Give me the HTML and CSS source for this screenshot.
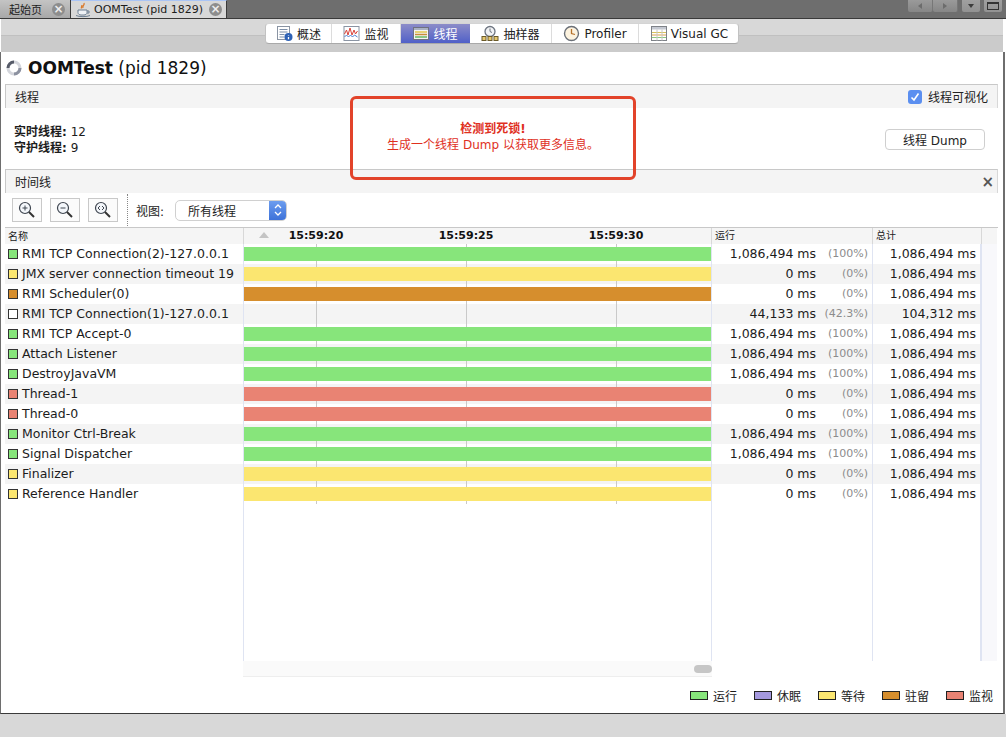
FILE: index.html
```html
<!DOCTYPE html>
<html lang="zh">
<head>
<meta charset="utf-8">
<title>OOMTest (pid 1829)</title>
<link rel="stylesheet" href="styles.css">
</head>
<body>
<div class="app">
  <div class="tabbar">
    <div class="tab tab-idle"><span class="tab-label">起始页</span><span class="tab-close">×</span></div>
    <div class="tab tab-active">
      <svg class="cup" width="16" height="16" viewBox="0 0 16 16"><path d="M9 1c1 2-2 3-1 5 M7 3c0 1.500-1 2-.5 3.500" fill="none" stroke="#d9792b" stroke-width="1.300"/><path d="M3 8h9v2.500c0 1.500-1.500 2.500-3 2.500H6c-1.500 0-3-1-3-2.500z" fill="#eef1f5" stroke="#6d7f92"/><path d="M12 9h2v2h-2" fill="none" stroke="#6d7f92"/><path d="M1 13.500c3 1.500 11 1.500 14 0" fill="none" stroke="#6d7f92"/></svg>
      <span class="tab-label">OOMTest (pid 1829)</span><span class="tab-close">×</span>
    </div>
    <div class="win-btns">
      <div class="nav-pair"><span class="win-btn nav"><i class="tri tri-l"></i></span><span class="win-btn nav"><i class="tri tri-r"></i></span></div>
      <span class="win-btn drop"><i class="tri tri-d"></i></span>
      <span class="win-btn max"><i class="max-box"></i></span>
    </div>
  </div>

  <div class="toolbar">
    <div class="segments">
      <div class="seg">
        <svg width="17" height="17" viewBox="0 0 17 17"><rect x="1.500" y="1.500" width="12" height="13" fill="#fff" stroke="#8a94a3"/><path d="M3.500 4.500h8M3.500 7h8M3.500 9.500h5M3.500 12h5" stroke="#7d8fa8"/><circle cx="12.500" cy="12" r="4" fill="#2f62b5"/><path d="M12.500 10.500v.6M12.500 12v2.200" stroke="#fff" stroke-width="1.300"/></svg>
        <span>概述</span>
      </div>
      <div class="seg">
        <svg width="17" height="17" viewBox="0 0 17 17"><rect x="1" y="1.500" width="15" height="14" fill="#fff" stroke="#8a94a3"/><path d="M1.500 9l2-4 1.500 5 2-7 2 7 2-5 1.500 4 2-3" fill="none" stroke="#d8433a"/><path d="M1.500 12l2-2 2 2 2-2 2 2 2-2 3 2" fill="none" stroke="#4b7fd0"/></svg>
        <span>监视</span>
      </div>
      <div class="seg seg-on">
        <svg width="16" height="15" viewBox="0 0 16 15"><rect x=".5" y="1.500" width="15" height="12" fill="#f4f4f4" stroke="#6f7180"/><rect x="1" y="2" width="14" height="2" fill="#aab2c4"/><path d="M2 6h12" stroke="#e3c94c" stroke-width="1.300"/><path d="M2 8.500h12" stroke="#c88d3a" stroke-width="1.300"/><path d="M2 11h12" stroke="#69b85f" stroke-width="1.300"/></svg>
        <span>线程</span>
      </div>
      <div class="seg">
        <svg width="18" height="17" viewBox="0 0 18 17"><circle cx="9" cy="6.500" r="5" fill="#f2f3f5" stroke="#6d7480" stroke-width="1.300"/><path d="M9 3.500v3l2 1" fill="none" stroke="#6d7480"/><rect x="1" y="11.500" width="4" height="4" fill="#e5c66d" stroke="#6b5a28"/><rect x="7" y="11.500" width="4" height="4" fill="#e5c66d" stroke="#6b5a28"/><rect x="13" y="11.500" width="4" height="4" fill="#e5c66d" stroke="#6b5a28"/></svg>
        <span>抽样器</span>
      </div>
      <div class="seg">
        <svg width="17" height="17" viewBox="0 0 17 17"><circle cx="8.500" cy="8.500" r="7" fill="#fdf3df" stroke="#6b7078" stroke-width="1.400"/><path d="M8.500 4v4.500l3.500 1" fill="none" stroke="#b7722a" stroke-width="1.300"/></svg>
        <span>Profiler</span>
      </div>
      <div class="seg">
        <svg width="16" height="15" viewBox="0 0 16 15"><rect x=".5" y=".5" width="15" height="14" fill="#fff" stroke="#7e8288"/><rect x="1" y="1" width="14" height="2.500" fill="#c5c9d2"/><path d="M1 6.500h14" stroke="#d9c25a"/><path d="M1 9h14" stroke="#e0a04a"/><path d="M1 11.500h14" stroke="#8dc77f"/><path d="M6 3.500v11M11 3.500v11" stroke="#c8c8c8"/></svg>
        <span>Visual GC</span>
      </div>
    </div>
  </div>

  <div class="content">
    <h1 class="title">
      <svg width="16" height="16" viewBox="0 0 16 16"><circle cx="8" cy="8" r="6" fill="none" stroke="#d4d6dc" stroke-width="3"/><path d="M2 8a6 6 0 0 1 6-6" fill="none" stroke="#565b68" stroke-width="3"/><path d="M14 8a6 6 0 0 1-6 6" fill="none" stroke="#8c91a0" stroke-width="3"/></svg>
      <span><b>OOMTest</b> (pid 1829)</span>
    </h1>

    <div class="pane-head">
      <span>线程</span>
      <label class="visual">
        <span class="check"><svg width="10" height="10" viewBox="0 0 10 10"><path d="M1.500 5.500l2.500 2.500 4.500-6.500" fill="none" stroke="#fff" stroke-width="1.600"/></svg></span>
        <span>线程可视化</span>
      </label>
    </div>

    <div class="stats">
      <div class="stats-text">
        <div><b>实时线程:</b> 12</div>
        <div><b>守护线程:</b> 9</div>
      </div>
      <button class="dump">线程 Dump</button>
    </div>

    <div class="pane-head pane-head-2">
      <span>时间线</span>
      <span class="pane-x">×</span>
    </div>

    <div class="tl-tools">
      <span class="zoom-btn"><svg width="20" height="20" viewBox="0 0 20 20"><circle cx="8" cy="8" r="5.500" fill="#f4f7fb" stroke="#3f4650" stroke-width="1.200"/><path d="M12 12l5 5" stroke="#333" stroke-width="2"/><path d="M5.500 8h5M8 5.500v5" stroke="#3f4650"/></svg></span>
      <span class="zoom-btn"><svg width="20" height="20" viewBox="0 0 20 20"><circle cx="8" cy="8" r="5.500" fill="#f4f7fb" stroke="#3f4650" stroke-width="1.200"/><path d="M12 12l5 5" stroke="#333" stroke-width="2"/><path d="M5.500 8h5" stroke="#3f4650"/></svg></span>
      <span class="zoom-btn"><svg width="20" height="20" viewBox="0 0 20 20"><circle cx="8" cy="8" r="5.500" fill="#f4f7fb" stroke="#3f4650" stroke-width="1.200"/><path d="M12 12l5 5" stroke="#333" stroke-width="2"/><path d="M7 6l-2 2 2 2M9 6l2 2-2 2" fill="none" stroke="#3f4650"/></svg></span>
      <span class="dots"></span>
      <span class="view-label">视图:</span>
      <div class="combo">
        <span class="combo-text">所有线程</span>
        <span class="stepper"><svg width="8" height="14" viewBox="0 0 8 14"><path d="M1 5l3-3 3 3M1 9l3 3 3-3" fill="none" stroke="#fff" stroke-width="1.300"/></svg></span>
      </div>
    </div>

    <div class="table">
      <div class="row head">
        <div class="c-name">名称</div>
        <div class="c-time">
          <i class="sort"></i>
          <span class="tick t1">15:59:20</span><span class="tick t2">15:59:25</span><span class="tick t3">15:59:30</span>
        </div>
        <div class="c-run">运行</div>
        <div class="c-total">总计</div>
        <div class="c-end"></div>
      </div>

      <div class="row"><div class="c-name"><i class="sw green"></i>RMI TCP Connection(2)-127.0.0.1</div><div class="c-time"><i class="bar green"></i></div><div class="c-run"><span>1,086,494 ms</span><em>(100%)</em></div><div class="c-total">1,086,494 ms</div><div class="c-end"></div></div>
      <div class="row alt"><div class="c-name"><i class="sw yellow"></i>JMX server connection timeout 19</div><div class="c-time"><i class="bar yellow"></i></div><div class="c-run"><span>0 ms</span><em>(0%)</em></div><div class="c-total">1,086,494 ms</div><div class="c-end"></div></div>
      <div class="row"><div class="c-name"><i class="sw orange"></i>RMI Scheduler(0)</div><div class="c-time"><i class="bar orange"></i></div><div class="c-run"><span>0 ms</span><em>(0%)</em></div><div class="c-total">1,086,494 ms</div><div class="c-end"></div></div>
      <div class="row alt"><div class="c-name"><i class="sw blank"></i>RMI TCP Connection(1)-127.0.0.1</div><div class="c-time"></div><div class="c-run"><span>44,133 ms</span><em>(42.3%)</em></div><div class="c-total">104,312 ms</div><div class="c-end"></div></div>
      <div class="row"><div class="c-name"><i class="sw green"></i>RMI TCP Accept-0</div><div class="c-time"><i class="bar green"></i></div><div class="c-run"><span>1,086,494 ms</span><em>(100%)</em></div><div class="c-total">1,086,494 ms</div><div class="c-end"></div></div>
      <div class="row alt"><div class="c-name"><i class="sw green"></i>Attach Listener</div><div class="c-time"><i class="bar green"></i></div><div class="c-run"><span>1,086,494 ms</span><em>(100%)</em></div><div class="c-total">1,086,494 ms</div><div class="c-end"></div></div>
      <div class="row"><div class="c-name"><i class="sw green"></i>DestroyJavaVM</div><div class="c-time"><i class="bar green"></i></div><div class="c-run"><span>1,086,494 ms</span><em>(100%)</em></div><div class="c-total">1,086,494 ms</div><div class="c-end"></div></div>
      <div class="row alt"><div class="c-name"><i class="sw red"></i>Thread-1</div><div class="c-time"><i class="bar red"></i></div><div class="c-run"><span>0 ms</span><em>(0%)</em></div><div class="c-total">1,086,494 ms</div><div class="c-end"></div></div>
      <div class="row"><div class="c-name"><i class="sw red"></i>Thread-0</div><div class="c-time"><i class="bar red"></i></div><div class="c-run"><span>0 ms</span><em>(0%)</em></div><div class="c-total">1,086,494 ms</div><div class="c-end"></div></div>
      <div class="row alt"><div class="c-name"><i class="sw green"></i>Monitor Ctrl-Break</div><div class="c-time"><i class="bar green"></i></div><div class="c-run"><span>1,086,494 ms</span><em>(100%)</em></div><div class="c-total">1,086,494 ms</div><div class="c-end"></div></div>
      <div class="row"><div class="c-name"><i class="sw green"></i>Signal Dispatcher</div><div class="c-time"><i class="bar green"></i></div><div class="c-run"><span>1,086,494 ms</span><em>(100%)</em></div><div class="c-total">1,086,494 ms</div><div class="c-end"></div></div>
      <div class="row alt"><div class="c-name"><i class="sw yellow"></i>Finalizer</div><div class="c-time"><i class="bar yellow"></i></div><div class="c-run"><span>0 ms</span><em>(0%)</em></div><div class="c-total">1,086,494 ms</div><div class="c-end"></div></div>
      <div class="row"><div class="c-name"><i class="sw yellow"></i>Reference Handler</div><div class="c-time"><i class="bar yellow"></i></div><div class="c-run"><span>0 ms</span><em>(0%)</em></div><div class="c-total">1,086,494 ms</div><div class="c-end"></div></div>

      <div class="row filler"><div class="c-name"></div><div class="c-time"></div><div class="c-run"></div><div class="c-total"></div><div class="c-end"></div></div>
    </div>

    <div class="hscroll"><div class="track"><i class="thumb"></i></div></div>

    <div class="legend">
      <span class="item"><i class="key green"></i>运行</span>
      <span class="item"><i class="key purple"></i>休眠</span>
      <span class="item"><i class="key yellow"></i>等待</span>
      <span class="item"><i class="key orange"></i>驻留</span>
      <span class="item"><i class="key red"></i>监视</span>
    </div>

    <div class="alert">
      <strong>检测到死锁!</strong>
      <span>生成一个线程 Dump 以获取更多信息。</span>
    </div>
  </div>
  <div class="status"></div>
</div>
</body>
</html>
```

FILE: styles.css
```css
* { box-sizing: border-box; }
html, body { margin: 0; height: 100%; }
body {
  width: 1006px;
  height: 737px;
  overflow: hidden;
  background: #fff;
  color: #1c1c1c;
  font-family: "DejaVu Sans", "Noto Sans CJK SC", sans-serif;
  font-size: 12px;
}
.app { display: flex; flex-direction: column; height: 737px; }

/* tab bar */
.tabbar {
  height: 19px;
  flex: none;
  display: flex;
  background: #6e6e6e;
  border-bottom: 1px solid #3a3a3a;
}
.tab { display: flex; align-items: center; height: 18px; }
.tab-idle {
  width: 71px;
  padding-left: 9px;
  background: linear-gradient(#c4c4c4, #a8a8a8);
  border-right: 1px solid #3a3a3a;
  font-size: 11px;
}
.tab-active {
  width: 156px;
  padding-left: 4px;
  background: #d8d8d8;
  border-top: 1px solid #a9c4f5;
  border-right: 1px solid #3a3a3a;
  font-size: 11px;
}
.cup { margin-right: 3px; flex: none; }
.tab-close {
  width: 13px;
  height: 13px;
  margin-left: auto;
  margin-right: 4px;
  border-radius: 50%;
  background: #8d8d8d;
  color: #eee;
  font-size: 12px;
  line-height: 12px;
  font-weight: bold;
  text-align: center;
}
.tab-idle .tab-close { margin-right: 5px; }
.win-btns { margin-left: auto; display: flex; padding-right: 4px; gap: 4px; height: 12px; }
.nav-pair { display: flex; }
.win-btn {
  display: flex;
  align-items: center;
  justify-content: center;
  height: 12px;
  background: linear-gradient(#9a9a9a, #868686);
  border-radius: 0 0 2px 2px;
}
.nav { width: 25px; border-right: 1px solid #777; }
.drop { width: 18px; background: linear-gradient(#a0a0a0, #929292); }
.max { width: 18px; background: linear-gradient(#a0a0a0, #929292); }
.tri { width: 0; height: 0; border: 3px solid transparent; }
.tri-l { border-right: 4px solid #6c6c6c; border-left-width: 0; }
.tri-r { border-left: 4px solid #6c6c6c; border-right-width: 0; }
.tri-d { border-top: 4px solid #3c3c3c; border-bottom-width: 0; }
.max-box { width: 12px; height: 8px; border: 1px solid #333; border-top-width: 2px; }

/* toolbar */
.toolbar {
  height: 33px;
  flex: none;
  margin: 0 3px 0 1px;
  padding: 4px 0 0 264px;
  background: linear-gradient(#d8d8d8 0, #d8d8d8 16px, #c0c0c0 16px, #c0c0c0 17px, #cbcbcb 17px);
}
.segments {
  display: grid;
  grid-template-columns: 66px 69px 69px 82px 87px 101px;
  width: 474px;
  height: 21px;
  background: #fff;
  border-radius: 4px;
  border: 1px solid #c2c2c2;
  border-top-color: #d4d4d4;
  border-bottom-color: #a9a9a9;
  overflow: hidden;
}
.seg {
  display: flex;
  align-items: center;
  justify-content: center;
  gap: 4px;
  border-right: 1px solid #dcdcdc;
  font-size: 12px;
  color: #222;
}
.seg:last-child { border-right: 0; }
.seg-on {
  background: linear-gradient(#8c8cc8, #5060c8);
  color: #fff;
  border-right: 0;
}

/* content */
.content {
  position: relative;
  flex: 1;
  display: flex;
  flex-direction: column;
  margin-left: 1px;
  margin-right: 1px;
  border-left: 1px solid #6e6e6e;
  border-right: 2px solid #6e6e6e;
  border-bottom: 1px solid #3a3a3a;
  padding-left: 4px;
  padding-right: 5px;
  margin-left: 0;
  margin-right: 1px;
}
.title {
  display: flex;
  align-items: center;
  gap: 6px;
  height: 32px;
  margin: 0 0 0 1px;
  font-size: 17px;
  font-weight: normal;
  color: #111;
}
.pane-head {
  display: flex;
  align-items: center;
  justify-content: space-between;
  height: 24px;
  flex: none;
  padding: 0 9px;
  background: #f4f4f4;
  border-top: 1px solid #c8c8c8;
  border-left: 1px solid #c8c8c8;
  border-right: 1px solid #d8d8d8;
  font-size: 12px;
  color: #222;
}
.visual { display: flex; align-items: center; gap: 6px; }
.check {
  display: flex;
  align-items: center;
  justify-content: center;
  width: 14px;
  height: 14px;
  border-radius: 3px;
  background: #5b8ff0;
}
.stats {
  display: flex;
  justify-content: space-between;
  align-items: center;
  flex: none;
  height: 61px;
  padding: 0 13px 0 9px;
}
.stats-text { line-height: 16px; margin-top: 2px; }
.stats-text b { font-weight: bold; }
.dump {
  width: 100px;
  height: 21px;
  margin-top: 2px;
  padding: 0;
  background: #fff;
  border: 1px solid #cfcfcf;
  border-radius: 4px;
  font: 12px "DejaVu Sans", "Noto Sans CJK SC", sans-serif;
  color: #222;
}
.pane-x { color: #555; font-size: 15px; margin-right: -6px; font-weight: bold; }

.tl-tools {
  display: flex;
  align-items: center;
  height: 34px;
  flex: none;
  padding-left: 7px;
}
.zoom-btn {
  display: flex;
  align-items: center;
  justify-content: center;
  width: 30px;
  height: 24px;
  margin-right: 8px;
  background: #fbfbfb;
  border: 1px solid #c9c9c9;
}
.zoom-btn:nth-child(3) { margin-right: 0; }
.dots { width: 1px; height: 32px; margin: 0 8px 0 9px; border-left: 1px dotted #888; }
.view-label { width: 39px; }
.combo {
  display: flex;
  align-items: center;
  width: 112px;
  height: 21px;
  border: 1px solid #d0d0d0;
  border-radius: 5px;
  background: #fff;
  overflow: hidden;
}
.combo-text { flex: 1; padding-left: 12px; }
.stepper {
  display: flex;
  align-items: center;
  justify-content: center;
  width: 17px;
  height: 21px;
  background: linear-gradient(#6f9ff0, #3b70d8);
}

/* table */
.table {
  display: flex;
  flex-direction: column;
  height: 434px;
  flex: none;
  border-top: 1px solid #c8c8c8;
}
.row {
  display: grid;
  grid-template-columns: 238px 469px 161px 109px 15px;
  height: 20px;
  flex: none;
  font-size: 12.5px;
  line-height: 20px;
  width: 992px;
}
.alt { background: #f4f4f4; }
.head {
  height: 16px;
  background: #f5f5f5;
  font-size: 10px;
  line-height: 15px;
  color: #222;
}
.filler { flex: 1; }
.c-name { display: flex; align-items: center; padding-left: 3px; white-space: nowrap; overflow: hidden; }
.c-time {
  position: relative;
  border-left: 1px solid #dfe4f2;
  border-right: 1px solid #dfe4f2;
  background:
    linear-gradient(#c9c9c9, #c9c9c9) 72px 0 / 1px 100% no-repeat,
    linear-gradient(#c9c9c9, #c9c9c9) 222px 0 / 1px 100% no-repeat,
    linear-gradient(#c9c9c9, #c9c9c9) 372px 0 / 1px 100% no-repeat;
}
.c-run {
  display: flex;
  justify-content: flex-end;
  padding-right: 4px;
  border-right: 1px solid #dfe4f2;
}
.c-run em { width: 52px; text-align: right; font-style: normal; font-size: 11px; color: #8c8c8c; }
.c-total { text-align: right; padding-right: 4px; border-right: 2px solid #dfe4f2; }
.c-end { background: #f8f8fb; }
.filler .c-time { background: none; }
.head .c-name { padding-left: 3px; }
.head .c-time { background: none; border-left-color: #d8d8d8; border-right-color: #d8d8d8; }
.head .c-run { justify-content: flex-start; padding-left: 3px; border-right-color: #d8d8d8; }
.head .c-total { text-align: left; padding-left: 3px; border-right: 1px solid #d8d8d8; }
.head .c-end { background: none; }
.sort {
  position: absolute;
  left: 15px;
  top: 4px;
  border: 5px solid transparent;
  border-top-width: 0;
  border-bottom: 6px solid #c4c4c4;
}
.tick { position: absolute; top: 0; font-size: 11px; font-weight: bold; color: #111; transform: translateX(-50%); }
.t1 { left: 72px; }
.t2 { left: 222px; }
.t3 { left: 372px; }
.bar { display: block; height: 14px; margin-top: 3px; }
.sw {
  width: 10px;
  height: 10px;
  margin-right: 4px;
  flex: none;
  border: 1px solid #333;
}
.blank { background: #fff; }
.green { background-color: #87e57b; }
.yellow { background-color: #fbe670; }
.orange { background-color: #d68e2d; }
.red { background-color: #e98373; }
.purple { background-color: #a599df; }

.hscroll { height: 16px; flex: none; padding-left: 238px; }
.track {
  display: flex;
  justify-content: flex-end;
  align-items: center;
  width: 469px;
  height: 16px;
  background: #fafafa;
  border-bottom: 1px solid #eee;
}
.thumb { width: 18px; height: 8px; margin-top: 0; border-radius: 4px; background: #c6c6c6; }
.legend {
  display: flex;
  justify-content: flex-end;
  align-items: center;
  flex: 1;
  gap: 17px;
  padding-right: 5px;
}
.item { display: flex; align-items: center; gap: 5px; font-size: 12px; }
.key { width: 18px; height: 9px; border: 1px solid #222; }

/* overlay annotation */
.alert {
  position: absolute;
  left: 349px;
  top: 44px;
  width: 286px;
  height: 84px;
  display: flex;
  flex-direction: column;
  align-items: center;
  justify-content: center;
  padding-top: 4px;
  padding-bottom: 6px;
  border: 3px solid #e2432a;
  border-radius: 6px;
  color: #e0301e;
  font-size: 12px;
  line-height: 16px;
  background: transparent;
}
.alert strong { font-weight: bold; }

.status { height: 23px; flex: none; background: #d8d8d8; }
```
